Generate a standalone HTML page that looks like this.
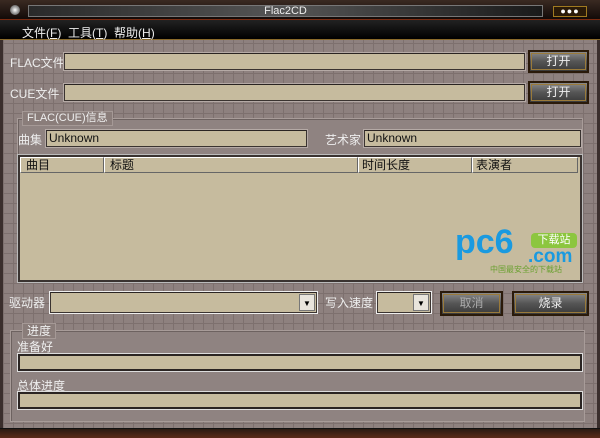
<!DOCTYPE html>
<html><head><meta charset="utf-8"><style>
*{margin:0;padding:0;box-sizing:border-box}
body{width:600px;height:438px;overflow:hidden;position:relative;font-family:"Liberation Sans","Noto Sans CJK SC",sans-serif;font-size:12px;color:#eee;
background-color:#8e817f;
background-image:linear-gradient(#7d706e 1px,transparent 1px),linear-gradient(90deg,#7d706e 1px,transparent 1px);background-size:10px 10px;background-position:3px 3px}
.a{position:absolute}
.in{position:absolute;background:#c6bb9e;border:1px solid #3a3330;border-top-color:#2a2422;box-shadow:0 0 0 1px #b5aaa6;color:#111}
.btn{position:absolute;background:linear-gradient(#8a8a8a,#555 50%,#3a3a3a);border:2px solid #2a1a0a;outline:1px solid #9a7a3a;outline-offset:-4px;color:#eee;text-align:center;font-size:12px}
.grp{position:absolute;border:1px solid #a89c99;background:#8f8381;box-shadow:inset 1px 1px 0 #6d6260}
.lab{position:absolute;background:#8a7d7a;border:1px solid #a59996;color:#eee;padding:0 4px;font-size:11px;line-height:13px}
.dd{position:absolute;width:16px;background:#e8e4dc;border:1px solid #777;color:#000;font-size:8px;text-align:center}
</style></head><body>
<div class="a" style="left:0;top:0;width:600px;height:20px;background:linear-gradient(#3a2a22,#120a08);border-bottom:1px solid #7a2a10"></div>
<div class="a" style="left:10px;top:5px;width:10px;height:10px;border-radius:50%;background:radial-gradient(#fff,#aaa 40%,#333)"></div>
<div class="a" style="left:28px;top:5px;width:515px;height:12px;background:linear-gradient(90deg,#2a2a2a,#555 50%,#1a1a1a);border:1px solid #777;text-align:center;color:#eee;font-size:11px;line-height:10px">Flac2CD</div>
<div class="a" style="left:553px;top:6px;width:34px;height:11px;border:1px solid #a07a20;background:#2a1a08;color:#fff;font-size:9px;line-height:9px;letter-spacing:1px;text-align:center">●●●</div>
<div class="a" style="left:0;top:20px;width:600px;height:20px;background:linear-gradient(#222,#000);border-bottom:1px solid #8a6a2a"></div>
<div class="a" style="left:22px;top:24px;font-size:12px;color:#eee">文件(<u>F</u>)&nbsp;&nbsp;工具(<u>T</u>)&nbsp;&nbsp;帮助(<u>H</u>)</div>

<div class="a" style="left:10px;top:54px">FLAC文件</div>
<div class="in" style="left:64px;top:53px;width:461px;height:17px"></div>
<div class="btn" style="left:528px;top:50px;width:61px;height:23px;line-height:19px">打开</div>
<div class="a" style="left:10px;top:85px">CUE文件</div>
<div class="in" style="left:64px;top:84px;width:461px;height:17px"></div>
<div class="btn" style="left:528px;top:81px;width:61px;height:23px;line-height:19px">打开</div>

<div class="grp" style="left:17px;top:118px;width:566px;height:165px"></div>
<div class="lab" style="left:22px;top:111px">FLAC(CUE)信息</div>
<div class="a" style="left:18px;top:131px">曲集</div>
<div class="in" style="left:46px;top:130px;width:261px;height:17px;padding-left:2px;line-height:15px">Unknown</div>
<div class="a" style="left:325px;top:131px">艺术家</div>
<div class="in" style="left:364px;top:130px;width:217px;height:17px;padding-left:2px;line-height:15px">Unknown</div>
<div class="in" style="left:18px;top:155px;width:564px;height:127px;border:2px solid #3a3330;box-shadow:0 0 0 1px #bbb"></div>
<div class="a" style="left:20px;top:157px;width:558px;height:16px;color:#111;font-size:12px;line-height:15px">
<div class="a" style="left:0;width:84px;height:16px;border:1px solid #fff;border-right-color:#666;border-bottom-color:#666;padding-left:5px">曲目</div>
<div class="a" style="left:84px;width:254px;height:16px;border:1px solid #fff;border-right-color:#666;border-bottom-color:#666;padding-left:5px">标题</div>
<div class="a" style="left:338px;width:114px;height:16px;border:1px solid #fff;border-right-color:#666;border-bottom-color:#666;padding-left:3px">时间长度</div>
<div class="a" style="left:452px;width:106px;height:16px;border:1px solid #fff;border-right-color:#666;border-bottom-color:#666;padding-left:3px">表演者</div>
</div>
<div class="a" style="left:455px;top:225px;font-size:34px;font-weight:bold;color:#1a9ae0;line-height:34px;font-family:'Liberation Sans',sans-serif">pc6</div>
<div class="a" style="left:531px;top:233px;width:46px;height:15px;background:#8cc63f;border-radius:4px;color:#fff;font-size:11px;text-align:center;line-height:15px">下载站</div>
<div class="a" style="left:528px;top:247px;font-size:19px;font-weight:bold;color:#1a9ae0;line-height:20px">.com</div>
<div class="a" style="left:490px;top:265px;font-size:8px;color:#6aa030;line-height:9px">中国最安全的下载站</div>

<div class="a" style="left:9px;top:294px">驱动器</div>
<div class="in" style="left:50px;top:292px;width:267px;height:21px;box-shadow:0 0 0 1px #eee"></div>
<div class="dd" style="left:299px;top:294px;height:17px;line-height:17px">▼</div>
<div class="a" style="left:325px;top:294px">写入速度</div>
<div class="in" style="left:377px;top:292px;width:54px;height:21px;box-shadow:0 0 0 1px #eee"></div>
<div class="dd" style="left:413px;top:294px;height:17px;line-height:17px">▼</div>
<div class="btn" style="left:440px;top:291px;width:63px;height:25px;line-height:21px;color:#aaa">取消</div>
<div class="btn" style="left:512px;top:291px;width:77px;height:25px;line-height:21px">烧录</div>

<div class="grp" style="left:10px;top:330px;width:575px;height:92px"></div>
<div class="lab" style="left:22px;top:323px;font-size:12px;line-height:14px">进度</div>
<div class="a" style="left:17px;top:338px">准备好</div>
<div class="in" style="left:18px;top:354px;width:564px;height:17px;border:2px solid #2a2422;box-shadow:0 0 0 1px #ddd"></div>
<div class="a" style="left:17px;top:377px">总体进度</div>
<div class="in" style="left:18px;top:392px;width:564px;height:17px;border:2px solid #2a2422;box-shadow:0 0 0 1px #ddd"></div>

<div class="a" style="left:0;top:428px;width:600px;height:10px;background:linear-gradient(#2a1a12,#5a2a18);border-top:1px solid #111"></div>
<div class="a" style="left:0;top:40px;width:3px;height:388px;background:#3a2e2c"></div>
<div class="a" style="left:597px;top:40px;width:3px;height:388px;background:#3a2e2c"></div>
</body></html>
